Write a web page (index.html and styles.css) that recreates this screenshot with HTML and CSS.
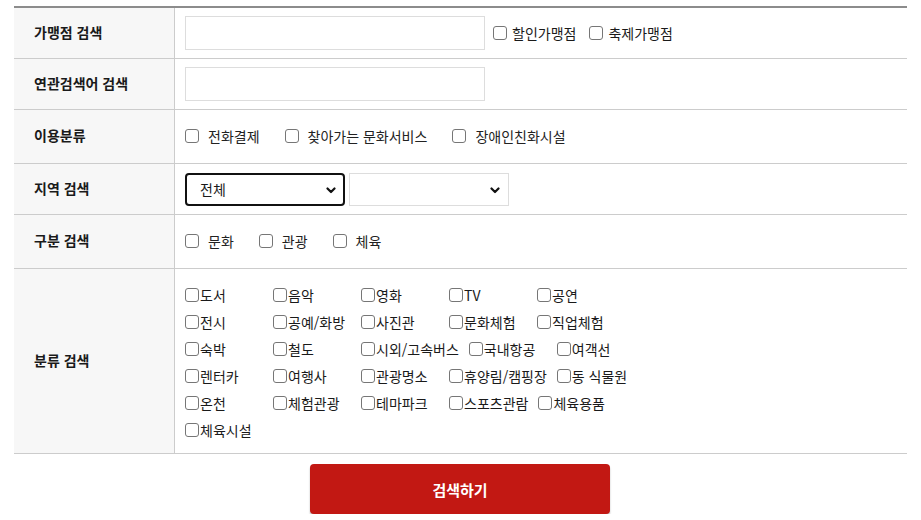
FILE: index.html
```html
<!DOCTYPE html>
<html lang="ko">
<head>
<meta charset="utf-8">
<title>가맹점 검색</title>
<link rel="stylesheet" href="styles.css">
</head>
<body>
<div class="page">
  <div class="form">
    <div class="row h51">
      <div class="th">가맹점 검색</div>
      <div class="td">
        <input type="text" class="text-input">
        <label class="opt-inline first"><input type="checkbox" class="cb">할인가맹점</label>
        <label class="opt-inline"><input type="checkbox" class="cb">축제가맹점</label>
      </div>
    </div>
    <div class="row h51">
      <div class="th">연관검색어 검색</div>
      <div class="td"><input type="text" class="text-input"></div>
    </div>
    <div class="row h54">
      <div class="th">이용분류</div>
      <div class="td opts">
        <label class="opt"><input type="checkbox" class="cb">전화결제</label>
        <label class="opt"><input type="checkbox" class="cb">찾아가는 문화서비스</label>
        <label class="opt"><input type="checkbox" class="cb">장애인친화시설</label>
      </div>
    </div>
    <div class="row h51">
      <div class="th">지역 검색</div>
      <div class="td selects">
        <div class="select-wrap">
          <select class="sel sel-focus"><option>전체</option></select>
          <svg class="chev" width="10" height="7" viewBox="0 0 10 7"><path d="M1.5 1.5 L5 5 L8.5 1.5" fill="none" stroke="#111" stroke-width="2.2" stroke-linecap="round" stroke-linejoin="round"/></svg>
        </div>
        <div class="select-wrap">
          <select class="sel"><option></option></select>
          <svg class="chev" width="10" height="7" viewBox="0 0 10 7"><path d="M1.5 1.5 L5 5 L8.5 1.5" fill="none" stroke="#111" stroke-width="2.2" stroke-linecap="round" stroke-linejoin="round"/></svg>
        </div>
      </div>
    </div>
    <div class="row h54">
      <div class="th">구분 검색</div>
      <div class="td opts">
        <label class="opt"><input type="checkbox" class="cb">문화</label>
        <label class="opt"><input type="checkbox" class="cb">관광</label>
        <label class="opt"><input type="checkbox" class="cb">체육</label>
      </div>
    </div>
    <div class="row h185">
      <div class="th">분류 검색</div>
      <div class="td cat-cell">
        <div class="cat-grid">
          <label class="cat"><input type="checkbox" class="cb">도서</label>
          <label class="cat"><input type="checkbox" class="cb">음악</label>
          <label class="cat"><input type="checkbox" class="cb">영화</label>
          <label class="cat"><input type="checkbox" class="cb">TV</label>
          <label class="cat"><input type="checkbox" class="cb">공연</label>
          <label class="cat"><input type="checkbox" class="cb">전시</label>
          <label class="cat"><input type="checkbox" class="cb">공예/화방</label>
          <label class="cat"><input type="checkbox" class="cb">사진관</label>
          <label class="cat"><input type="checkbox" class="cb">문화체험</label>
          <label class="cat"><input type="checkbox" class="cb">직업체험</label>
          <label class="cat"><input type="checkbox" class="cb">숙박</label>
          <label class="cat"><input type="checkbox" class="cb">철도</label>
          <label class="cat"><input type="checkbox" class="cb">시외/고속버스</label>
          <label class="cat"><input type="checkbox" class="cb">국내항공</label>
          <label class="cat"><input type="checkbox" class="cb">여객선</label>
          <label class="cat"><input type="checkbox" class="cb">렌터카</label>
          <label class="cat"><input type="checkbox" class="cb">여행사</label>
          <label class="cat"><input type="checkbox" class="cb">관광명소</label>
          <label class="cat"><input type="checkbox" class="cb">휴양림/캠핑장</label>
          <label class="cat"><input type="checkbox" class="cb">동 식물원</label>
          <label class="cat"><input type="checkbox" class="cb">온천</label>
          <label class="cat"><input type="checkbox" class="cb">체험관광</label>
          <label class="cat"><input type="checkbox" class="cb">테마파크</label>
          <label class="cat"><input type="checkbox" class="cb">스포츠관람</label>
          <label class="cat"><input type="checkbox" class="cb">체육용품</label>
          <label class="cat"><input type="checkbox" class="cb">체육시설</label>
        </div>
      </div>
    </div>
  </div>
  <div class="btn-area">
    <button type="button" class="btn-search">검색하기</button>
  </div>
</div>
</body>
</html>
```

FILE: styles.css
```css
* { box-sizing: border-box; }
html, body { margin: 0; padding: 0; background: #fff; }
body {
  font-family: "Noto Sans CJK KR", "Noto Sans", sans-serif;
  font-size: 14px;
  color: #222;
}
.page { padding: 6px 14px 0 14px; }
.form { border-top: 2px solid #8c8c8c; }
.row {
  display: flex;
  border-bottom: 1px solid #cccccc;
}
.h51 { height: 51px; }
.h54 { height: 54px; }
.h185 { height: 185px; }
.th {
  width: 161px;
  flex: none;
  background: #f7f7f7;
  border-right: 1px solid #cccccc;
  padding-left: 20px;
  display: flex;
  align-items: center;
  font-weight: bold;
  font-size: 14px;
  color: #1a1a1a;
  line-height: 16px;
  padding-bottom: 3px;
}
.td {
  flex: 1;
  padding-left: 10px;
  display: flex;
  align-items: center;
  line-height: 16px;
}
.text-input {
  width: 300px;
  height: 34px;
  border: 1px solid #dddddd;
  margin: 0;
  padding: 0 8px;
  font: inherit;
  outline: none;
}
.cb {
  -webkit-appearance: none;
  appearance: none;
  width: 14px;
  height: 14px;
  margin: 0;
  border: 1px solid #767676;
  border-radius: 3px;
  background: #fff;
  flex: none;
}
.opt-inline {
  display: flex;
  align-items: center;
  color: #1a1a1a;
  margin-left: 13px;
  padding-bottom: 1px;
}
.opt-inline.first { margin-left: 8px; }
.opt-inline .cb { margin-right: 5px; }
.opts { gap: 25px; padding-bottom: 2px; }
.opt {
  display: flex;
  align-items: center;
  color: #222;
}
.opt .cb { margin-right: 9px; }
.selects { gap: 4px; }
.select-wrap { position: relative; }
.sel {
  -webkit-appearance: none;
  appearance: none;
  width: 160px;
  height: 33px;
  margin: 0;
  border: 1px solid #dddddd;
  border-radius: 0;
  background: #fff;
  font: inherit;
  color: #1a1a1a;
  padding: 0 0 1px 15px;
  outline: none;
  display: block;
}
.sel-focus {
  border: 2px solid #111;
  border-radius: 4px;
  padding-left: 13px;
}
.chev {
  position: absolute;
  right: 9px;
  top: 14px;
}
.cat-cell { padding-top: 2px; }
.cat-grid {
  display: flex;
  flex-wrap: wrap;
  column-gap: 10px;
  width: 465px;
}
.cat {
  display: flex;
  align-items: center;
  min-width: 78px;
  height: 27px;
  color: #1a1a1a;
  white-space: nowrap;
}
.cat .cb { margin-right: 1px; }
.btn-area {
  display: flex;
  justify-content: center;
  padding: 10px 1px 0 0;
}
.btn-search {
  width: 300px;
  height: 50px;
  border: none;
  border-radius: 4px;
  background: #c21813;
  color: #fff;
  font-family: inherit;
  font-size: 15px;
  font-weight: bold;
  box-shadow: 0 2px 2px rgba(0, 0, 0, 0.28);
  cursor: pointer;
}
```
